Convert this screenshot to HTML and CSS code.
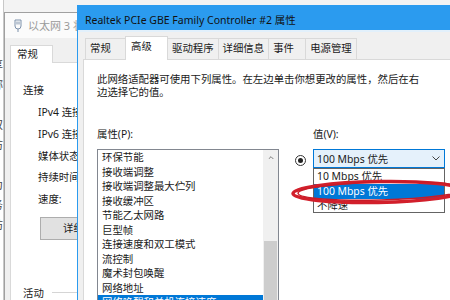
FILE: index.html
```html
<!DOCTYPE html>
<html lang="zh-CN">
<head>
    <meta charset="UTF-8">
    <meta name="viewport" content="width=device-width, initial-scale=1.0">
    <title>网卡属性</title>
    <link rel="stylesheet" href="styles.css">
</head>
<body>
<div class="desktop">
    <div class="far-window">
        <div>享</div>
        <div>称</div>
        <div>&nbsp;</div>
        <div>双</div>
        <div>访</div>
        <div>&nbsp;</div>
        <div>为</div>
        <div>务</div>
        <div>防</div>
    </div>

    <div class="win-back">
        <div class="back-title">
            <svg width="8" height="13" viewBox="0 0 8 13">
                <path d="M1 1h6v6a3 3 0 0 1-6 0z" fill="none" stroke="#7d91ab"/>
                <path d="M3 2.5v3M5 2.5v3M4 10v3" stroke="#7d91ab"/>
            </svg>
            <span>以太网 3 状态</span>
        </div>
        <div class="back-body">
            <div class="back-tab">常规</div>
            <div class="back-panel">
                <div class="grp">连接</div>
                <div class="stat-row">IPv4 连接:</div>
                <div class="stat-row">IPv6 连接:</div>
                <div class="stat-row">媒体状态:</div>
                <div class="stat-row">持续时间:</div>
                <div class="stat-row">速度:</div>
                <div class="details-btn">详细信息(E)...</div>
                <div class="activity">活动</div>
            </div>
        </div>
    </div>

    <div class="win-front">
        <div class="front-title">Realtek PCIe GBE Family Controller #2 属性</div>
        <div class="front-body">
            <div class="tabs">
                <div class="tab first">常规</div>
                <div class="tab active">高级</div>
                <div class="tab">驱动程序</div>
                <div class="tab">详细信息</div>
                <div class="tab">事件</div>
                <div class="tab">电源管理</div>
            </div>
            <div class="panel">
                <p class="desc">此网络适配器可使用下列属性。在左边单击你想更改的属性，然后在右边选择它的值。</p>
                <div class="props">
                    <div class="col-left">
                        <div class="lbl">属性(P):</div>
                        <div class="listbox">
                            <ul class="items">
                                <li>环保节能</li>
                                <li>接收端调整</li>
                                <li>接收端调整最大伫列</li>
                                <li>接收缓冲区</li>
                                <li>节能乙太网路</li>
                                <li>巨型帧</li>
                                <li>连接速度和双工模式</li>
                                <li>流控制</li>
                                <li>魔术封包唤醒</li>
                                <li>网络地址</li>
                                <li class="selected">网络唤醒和关机连接速度</li>
                            </ul>
                            <div class="scrollbar">
                                <svg class="up" width="8" height="5" viewBox="0 0 8 5">
                                    <path d="M0.5 4.5L4 1L7.5 4.5" fill="none" stroke="#606060" stroke-width="1.2"/>
                                </svg>
                                <div class="thumb"></div>
                            </div>
                        </div>
                    </div>
                    <div class="col-right">
                        <div class="lbl val-lbl">值(V):</div>
                        <div class="value-row">
                            <span class="radio"></span>
                            <div class="combo-wrap">
                                <div class="combo">
                                    <span>100 Mbps 优先</span>
                                    <svg width="8" height="5" viewBox="0 0 8 5">
                                        <path d="M0.5 0.5L4 4L7.5 0.5" fill="none" stroke="#444" stroke-width="1"/>
                                    </svg>
                                </div>
                                <ul class="dropdown">
                                    <li>10 Mbps 优先</li>
                                    <li class="cur">100 Mbps 优先</li>
                                    <li>不降速</li>
                                </ul>
                            </div>
                        </div>
                    </div>
                </div>
            </div>
        </div>
    </div>

    <svg class="annot" width="450" height="300" viewBox="0 0 450 300">
        <ellipse cx="378" cy="192" rx="85" ry="10.5" transform="rotate(-1 378 192)" fill="none" stroke="#d21f2b" stroke-width="3.5"/>
        <ellipse cx="381" cy="191" rx="83" ry="9" transform="rotate(-1.5 381 191)" fill="none" stroke="#c81c28" stroke-width="1.5"/>
    </svg>
</div>
</body>
</html>
```

FILE: styles.css
```css
* {
    box-sizing: border-box;
    margin: 0;
    padding: 0;
}
body {
    margin: 0;
    width: 450px;
    height: 300px;
    overflow: hidden;
    background: #f3f3f3;
    font-family: "Noto Sans", "Noto Sans CJK SC", sans-serif;
    font-size: 10.4px;
    color: #1a1a1a;
}
.desktop {
    position: relative;
    width: 450px;
    height: 300px;
    overflow: hidden;
}

/* window far behind, only a sliver shows */
.far-window {
    position: absolute;
    left: -12px;
    top: 0;
    width: 16px;
    height: 300px;
    background: #fff;
    border-right: 1px solid #c8c8c8;
    overflow: hidden;
    padding-top: 58px;
}
.far-window div {
    height: 20px;
    line-height: 14px;
    text-align: right;
    font-size: 11px;
    color: #444;
}

/* 以太网 3 状态 */
.win-back {
    position: absolute;
    left: 4px;
    top: 12px;
    width: 120px;
    height: 300px;
    background: #f0f0f0;
    border: 1px solid #a0a0a0;
}
.back-title {
    height: 25px;
    background: #fbfbfb;
    display: flex;
    align-items: center;
    gap: 6px;
    padding: 0 0 1px 9px;
    color: #9a9a9a;
    font-size: 11px;
    white-space: nowrap;
}
.back-body {
    padding: 7px 0 0 5px;
}
.back-tab {
    position: relative;
    z-index: 1;
    width: 43px;
    height: 18px;
    margin-bottom: -1px;
    padding-left: 6px;
    line-height: 17px;
    background: #fff;
    border: 1px solid #d9d9d9;
    border-bottom: none;
}
.back-panel {
    height: 260px;
    padding: 20px 0 0 12px;
    background: #fff;
    border: 1px solid #d9d9d9;
    white-space: nowrap;
}
.grp {
    line-height: 14px;
}
.stat-row {
    height: 21.75px;
    line-height: 21.75px;
    padding-left: 15px;
}
.grp + .stat-row {
    margin-top: 5px;
}
.details-btn {
    display: inline-block;
    margin: 6px 0 0 17px;
    height: 23px;
    line-height: 21px;
    padding: 0 22px;
    background: #e1e1e1;
    border: 1px solid #adadad;
}
.activity {
    display: flex;
    align-items: center;
    gap: 8px;
    margin-top: 46px;
    line-height: 14px;
}
.activity::after {
    content: "";
    flex: 1;
    height: 1px;
    background: #d5d5d5;
}

/* Realtek 属性 */
.win-front {
    position: absolute;
    left: 77px;
    top: 5px;
    width: 390px;
    height: 310px;
    background: #f0f0f0;
    border: 1px solid #2b9bef;
}
.front-title {
    height: 26px;
    line-height: 26px;
    padding: 1px 0 0 7px;
    background: #2b9bef;
    color: #111;
    font-size: 10.5px;
    white-space: nowrap;
    border-bottom: 2px solid #e2f0fb;
}
.front-body {
    padding: 4px 0 0 5px;
}
.tabs {
    display: flex;
    align-items: flex-end;
    padding-left: 2px;
    height: 23px;
}
.tab {
    height: 21px;
    min-width: 38px;
    padding: 0 4px;
    line-height: 19px;
    background: #f0f0f0;
    border: 1px solid #d9d9d9;
    border-bottom: none;
    margin-right: -1px;
    white-space: nowrap;
}
.tab.first {
    min-width: 41px;
}
.tab.active {
    position: relative;
    z-index: 1;
    height: 24px;
    min-width: 43px;
    margin-bottom: -1px;
    padding-left: 5px;
    background: #fff;
}
.panel {
    height: 300px;
    padding: 13px 0 0 13px;
    background: #fff;
    border: 1px solid #d9d9d9;
}
.desc {
    width: 325px;
    line-height: 13px;
}
.props {
    display: flex;
    margin-top: 29px;
}
.lbl {
    line-height: 13px;
}
.col-left {
    width: 182px;
}
.listbox {
    display: flex;
    height: 160px;
    margin-top: 8px;
    background: #fff;
    border: 1px solid #828790;
}
.items {
    flex: 1;
    list-style: none;
    overflow: hidden;
}
.items li {
    height: 14.5px;
    line-height: 14.5px;
    padding-left: 4px;
    white-space: nowrap;
}
.items li.selected {
    background: #0078d7;
    color: #fff;
}
.scrollbar {
    width: 15px;
    display: flex;
    flex-direction: column;
    align-items: center;
    background: #f0f0f0;
}
.scrollbar .up {
    margin-top: 6px;
}
.thumb {
    width: 13px;
    height: 100px;
    margin-top: 82px;
    background: #cdcdcd;
}
.col-right {
    margin-left: 16px;
}
.val-lbl {
    padding-left: 18px;
}
.value-row {
    display: flex;
    align-items: flex-start;
    margin-top: 8px;
}
.radio {
    width: 11px;
    height: 11px;
    margin: 6px 7px 0 0;
    border: 1px solid #333;
    border-radius: 50%;
    display: flex;
    align-items: center;
    justify-content: center;
}
.radio::after {
    content: "";
    width: 5px;
    height: 5px;
    border-radius: 50%;
    background: #222;
}
.combo-wrap {
    position: relative;
    width: 132px;
}
.combo {
    height: 19px;
    display: flex;
    align-items: center;
    justify-content: space-between;
    padding: 0 4px 0 3px;
    background: #e5f1fb;
    border: 1px solid #0078d7;
    white-space: nowrap;
}
.dropdown {
    position: absolute;
    top: 19px;
    left: 0;
    right: 0;
    list-style: none;
    background: #fff;
    border: 1px solid #646464;
}
.dropdown li {
    height: 15px;
    line-height: 15px;
    padding-left: 3px;
    white-space: nowrap;
}
.dropdown li:last-child {
    height: 13px;
    line-height: 12px;
}
.dropdown li.cur {
    background: #0078d7;
    color: #fff;
}

/* red marker ring drawn on the screenshot */
.annot {
    position: absolute;
    left: 0;
    top: 0;
    pointer-events: none;
}
```
